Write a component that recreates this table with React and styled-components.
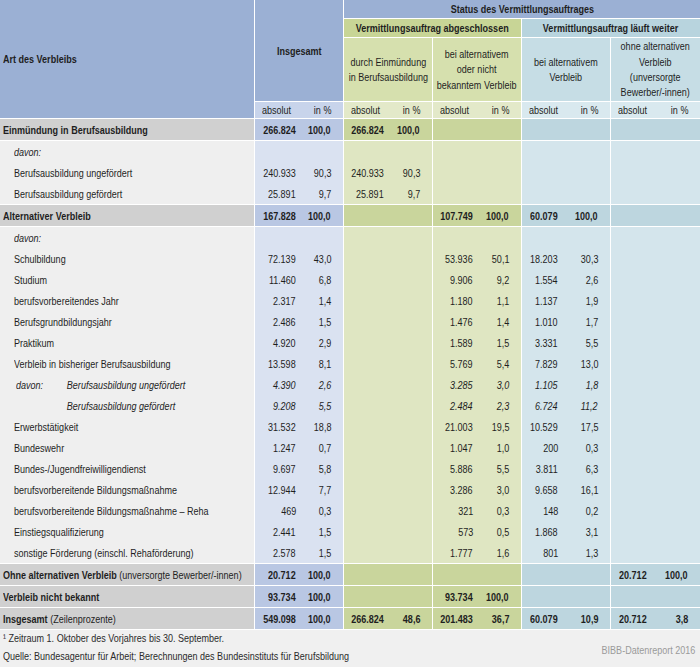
import React from "react";
import styled, { createGlobalStyle } from "styled-components";

const COLS = "254px 88px 88px 88px 88px 89px";

const tones = {
    label: { head: "#9bb0d4", row: "#efefef", strong: "#d0d0d0" },
    total: { head: "#9bb0d4", unit: "#c8d4eb", row: "#dae2f1", strong: "#b9c7e3", abs: 41 },
    green: { title: "#c8d596", caption: "#d6e0ae", unit: "#e3e9c9", row: "#dfe6c2", strong: "#c9d59c", abs: 40 },
    teal: { title: "#b8d4de", caption: "#c6dde5", unit: "#d9e9ef", row: "#d4e5ec", strong: "#bdd6df", abs: 36 },
};

const groupTones = ["total", "green", "green", "teal", "teal"];

const Global = createGlobalStyle`
    body {
        margin: 0;
        background: #f0f0f0;
    }
`;

const Page = styled.div`
    width: 700px;
    background: #f0f0f0;
    font-family: "Liberation Sans", Arial, sans-serif;
    font-size: 11px;
    color: #1e1e1e;
`;

// the reference face is a condensed sans; squeeze Arial-metric text to match
const Fit = styled.span`
    display: inline-block;
    white-space: nowrap;
    transform: scaleX(0.82);
    transform-origin: ${(p) => p.$o || "left"} center;
`;

const Head = styled.div`
    display: grid;
    grid-template-columns: ${COLS};
    grid-template-rows: 18px 18px 63px 16px;
    gap: 1px;
    background: #fff;
    padding-bottom: 1px;
`;

const HeadCell = styled.div`
    grid-column: ${(p) => p.$col};
    grid-row: ${(p) => p.$row};
    background: ${(p) => p.$bg};
    display: flex;
    align-items: center;
    justify-content: ${(p) => (p.$left ? "flex-start" : "center")};
    padding-left: ${(p) => (p.$left ? "3px" : "0")};
    font-weight: bold;
`;

const Caption = styled.div`
    grid-column: ${(p) => p.$col};
    grid-row: 3;
    background: ${(p) => p.$bg};
    display: flex;
    align-items: center;
    justify-content: center;
    text-align: center;
    line-height: 15.4px;
    padding-top: 1px;
`;

const Units = styled.div`
    grid-column: ${(p) => p.$col};
    grid-row: 4;
    background: ${(p) => p.$bg};
    display: flex;
    align-items: center;
    justify-content: space-between;
    padding: 0 12px 0 7px;
`;

const Row = styled.div`
    display: grid;
    grid-template-columns: ${COLS};
    grid-auto-rows: 21px;
    column-gap: 1px;
    background: #fff;
    padding-bottom: ${(p) => (p.$lined ? "1px" : "0")};
`;

const Label = styled.div`
    background: ${(p) => (p.$strong ? tones.label.strong : tones.label.row)};
    display: flex;
    align-items: center;
    padding-left: ${(p) => (p.$strong ? "3px" : p.$nested ? "16px" : "14px")};
    font-weight: ${(p) => (p.$strong ? "bold" : "normal")};
    font-style: ${(p) => (p.$italic ? "italic" : "normal")};
`;

const Light = styled.span`
    font-weight: normal;
`;

const Davon = styled.span`
    display: inline-block;
    width: 62px;
`;

const Values = styled.div`
    background: ${(p) => (p.$strong ? tones[p.$tone].strong : tones[p.$tone].row)};
    display: flex;
    align-items: center;
    font-weight: ${(p) => (p.$strong ? "bold" : "normal")};
    font-style: ${(p) => (p.$italic ? "italic" : "normal")};
`;

const Abs = styled.span`
    width: ${(p) => p.$w}px;
    text-align: right;
`;

const Pct = styled.span`
    flex: 1;
    text-align: right;
    padding-right: 12px;
`;

const Footer = styled.div`
    display: flex;
    justify-content: space-between;
    align-items: flex-start;
    height: 37px;
    padding: 0 5px 0 3px;
    line-height: 17.5px;
    color: #2a2a2a;
`;

const Source = styled.div`
    display: flex;
    flex-direction: column;
    align-items: flex-start;
`;

const Brand = styled.div`
    padding-top: 12px;
    color: #9a9a9a;
`;

const rows = [
    { label: "Einmündung in Berufsausbildung", strong: true, lined: true, v: [["266.824", "100,0"], ["266.824", "100,0"]] },
    { label: "davon:", italic: true, v: [] },
    { label: "Berufsausbildung ungefördert", v: [["240.933", "90,3"], ["240.933", "90,3"]] },
    { label: "Berufsausbildung gefördert", lined: true, v: [["25.891", "9,7"], ["25.891", "9,7"]] },
    { label: "Alternativer Verbleib", strong: true, lined: true, v: [["167.828", "100,0"], null, ["107.749", "100,0"], ["60.079", "100,0"]] },
    { label: "davon:", italic: true, v: [] },
    { label: "Schulbildung", v: [["72.139", "43,0"], null, ["53.936", "50,1"], ["18.203", "30,3"]] },
    { label: "Studium", v: [["11.460", "6,8"], null, ["9.906", "9,2"], ["1.554", "2,6"]] },
    { label: "berufsvorbereitendes Jahr", v: [["2.317", "1,4"], null, ["1.180", "1,1"], ["1.137", "1,9"]] },
    { label: "Berufsgrundbildungsjahr", v: [["2.486", "1,5"], null, ["1.476", "1,4"], ["1.010", "1,7"]] },
    { label: "Praktikum", v: [["4.920", "2,9"], null, ["1.589", "1,5"], ["3.331", "5,5"]] },
    { label: "Verbleib in bisheriger Berufsausbildung", v: [["13.598", "8,1"], null, ["5.769", "5,4"], ["7.829", "13,0"]] },
    { label: "Berufsausbildung ungefördert", sub: "davon:", italic: true, v: [["4.390", "2,6"], null, ["3.285", "3,0"], ["1.105", "1,8"]] },
    { label: "Berufsausbildung gefördert", sub: "", italic: true, v: [["9.208", "5,5"], null, ["2.484", "2,3"], ["6.724", "11,2"]] },
    { label: "Erwerbstätigkeit", v: [["31.532", "18,8"], null, ["21.003", "19,5"], ["10.529", "17,5"]] },
    { label: "Bundeswehr", v: [["1.247", "0,7"], null, ["1.047", "1,0"], ["200", "0,3"]] },
    { label: "Bundes-/Jugendfreiwilligendienst", v: [["9.697", "5,8"], null, ["5.886", "5,5"], ["3.811", "6,3"]] },
    { label: "berufsvorbereitende Bildungsmaßnahme", v: [["12.944", "7,7"], null, ["3.286", "3,0"], ["9.658", "16,1"]] },
    { label: "berufsvorbereitende Bildungsmaßnahme – Reha", v: [["469", "0,3"], null, ["321", "0,3"], ["148", "0,2"]] },
    { label: "Einstiegsqualifizierung", v: [["2.441", "1,5"], null, ["573", "0,5"], ["1.868", "3,1"]] },
    { label: "sonstige Förderung (einschl. Rehaförderung)", lined: true, v: [["2.578", "1,5"], null, ["1.777", "1,6"], ["801", "1,3"]] },
    { label: "Ohne alternativen Verbleib", note: "(unversorgte Bewerber/-innen)", strong: true, lined: true, v: [["20.712", "100,0"], null, null, null, ["20.712", "100,0"]] },
    { label: "Verbleib nicht bekannt", strong: true, lined: true, v: [["93.734", "100,0"], null, ["93.734", "100,0"]] },
    { label: "Insgesamt", note: "(Zeilenprozente)", strong: true, lined: true, v: [["549.098", "100,0"], ["266.824", "48,6"], ["201.483", "36,7"], ["60.079", "10,9"], ["20.712", "3,8"]] },
];

function TableHead() {
    return (
        <Head>
            <HeadCell $col="1" $row="1 / 5" $bg={tones.label.head} $left>
                <Fit>Art des Verbleibs</Fit>
            </HeadCell>
            <HeadCell $col="2" $row="1 / 4" $bg={tones.total.head}>
                <Fit $o="center">Insgesamt</Fit>
            </HeadCell>
            <HeadCell $col="3 / 7" $row="1" $bg={tones.total.head}>
                <Fit $o="center">Status des Vermittlungsauftrages</Fit>
            </HeadCell>
            <HeadCell $col="3 / 5" $row="2" $bg={tones.green.title}>
                <Fit $o="center">Vermittlungsauftrag abgeschlossen</Fit>
            </HeadCell>
            <HeadCell $col="5 / 7" $row="2" $bg={tones.teal.title}>
                <Fit $o="center">Vermittlungsauftrag läuft weiter</Fit>
            </HeadCell>
            <Caption $col="3" $bg={tones.green.caption}>
                <Fit $o="center">
                    durch Einmündung
                    <br />
                    in Berufsausbildung
                </Fit>
            </Caption>
            <Caption $col="4" $bg={tones.green.caption}>
                <Fit $o="center">
                    bei alternativem
                    <br />
                    oder nicht
                    <br />
                    bekanntem Verbleib
                </Fit>
            </Caption>
            <Caption $col="5" $bg={tones.teal.caption}>
                <Fit $o="center">
                    bei alternativem
                    <br />
                    Verbleib
                </Fit>
            </Caption>
            <Caption $col="6" $bg={tones.teal.caption}>
                <Fit $o="center">
                    ohne alternativen
                    <br />
                    Verbleib
                    <br />
                    (unversorgte
                    <br />
                    Bewerber/-innen)
                </Fit>
            </Caption>
            {groupTones.map((t, i) => (
                <Units key={t + i} $col={i + 2} $bg={tones[t].unit}>
                    <Fit>absolut</Fit>
                    <Fit $o="right">in %</Fit>
                </Units>
            ))}
        </Head>
    );
}

function DataRow({ row }) {
    const nested = row.sub !== undefined;
    return (
        <Row $lined={row.lined}>
            <Label $strong={row.strong} $italic={row.italic} $nested={nested}>
                <Fit>
                    {nested && <Davon>{row.sub}</Davon>}
                    {row.label}
                    {row.note && <Light> {row.note}</Light>}
                </Fit>
            </Label>
            {groupTones.map((t, i) => {
                const pair = row.v[i];
                return (
                    <Values key={i} $tone={t} $strong={row.strong} $italic={nested}>
                        {pair && (
                            <>
                                <Abs $w={tones[t].abs}>
                                    <Fit $o="right">{pair[0]}</Fit>
                                </Abs>
                                <Pct>
                                    <Fit $o="right">{pair[1]}</Fit>
                                </Pct>
                            </>
                        )}
                    </Values>
                );
            })}
        </Row>
    );
}

export default function App() {
    return (
        <Page>
            <Global />
            <TableHead />
            {rows.map((r, i) => (
                <DataRow key={i} row={r} />
            ))}
            <Footer>
                <Source>
                    <Fit>¹ Zeitraum 1. Oktober des Vorjahres bis 30. September.</Fit>
                    <Fit>Quelle: Bundesagentur für Arbeit; Berechnungen des Bundesinstituts für Berufsbildung</Fit>
                </Source>
                <Brand>
                    <Fit $o="right">BIBB-Datenreport 2016</Fit>
                </Brand>
            </Footer>
        </Page>
    );
}
